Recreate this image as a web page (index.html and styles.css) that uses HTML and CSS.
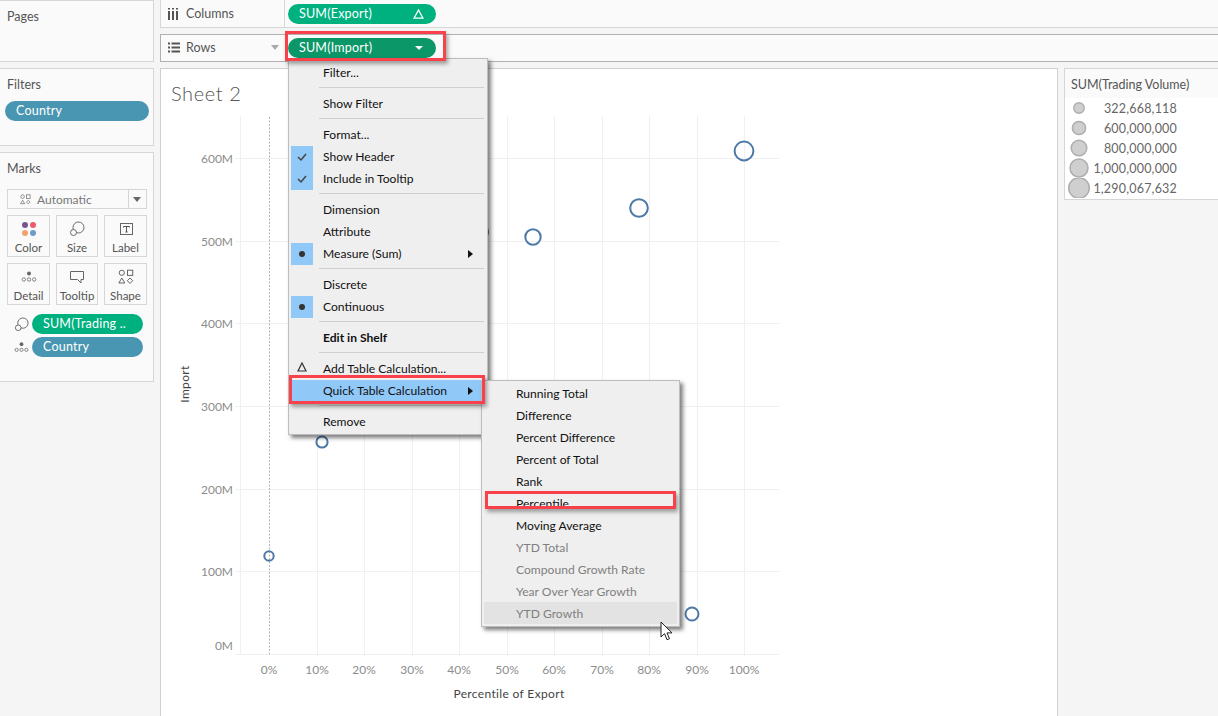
FILE: index.html
```html
<!DOCTYPE html>
<html lang="en">
<head>
    <meta charset="UTF-8">
    <meta name="viewport" content="width=device-width, initial-scale=1.0">
    <title>Sheet 2</title>
    <link rel="stylesheet" href="styles.css">
</head>
<body>
    <!-- Shared icons -->
    <svg class="sprite" width="0" height="0">
        <symbol id="icon-size" viewBox="0 0 16 16">
            <circle cx="9.5" cy="6.5" r="5.5" fill="none" stroke="#666"/>
            <circle cx="4.5" cy="11.5" r="3" fill="#fafafa" stroke="#666"/>
        </symbol>
        <symbol id="icon-detail" viewBox="0 0 16 16">
            <circle cx="8" cy="4.5" r="2" fill="#666"/>
            <circle cx="2.8" cy="10.5" r="1.7" fill="none" stroke="#666" stroke-width=".8"/>
            <circle cx="8" cy="10.5" r="1.7" fill="none" stroke="#666" stroke-width=".8"/>
            <circle cx="13.2" cy="10.5" r="1.7" fill="none" stroke="#666" stroke-width=".8"/>
        </symbol>
        <symbol id="icon-shape" viewBox="0 0 16 16">
            <circle cx="3.8" cy="3.8" r="2.6" fill="none" stroke="#666"/>
            <rect x="9.5" y="1.2" width="5.2" height="5.2" fill="none" stroke="#666"/>
            <path d="M3.8 9l3 5h-6z" fill="none" stroke="#666"/>
            <path d="M12 9l2.7 2.7-2.7 2.7-2.7-2.7z" fill="none" stroke="#666"/>
        </symbol>
    </svg>

    <div class="app">
        <!-- Left column -->
        <aside class="side">
            <section class="card card-pages">
                <h4 class="card-title">Pages</h4>
            </section>
            <section class="card card-filters">
                <h4 class="card-title">Filters</h4>
                <div class="pill pill-blue">Country</div>
            </section>
            <section class="card card-marks">
                <h4 class="card-title">Marks</h4>
                <div class="mark-select">
                    <svg class="auto-icon" width="11" height="11"><use href="#icon-shape"/></svg>
                    <span class="mark-select-text">Automatic</span>
                    <span class="mark-select-arrow"></span>
                </div>
                <div class="mark-grid">
                    <div class="mark-btn">
                        <svg width="16" height="16" viewBox="0 0 16 16">
                            <circle cx="4" cy="4" r="3" fill="#75578f"/>
                            <circle cx="12" cy="4" r="3" fill="#ee5a6c"/>
                            <circle cx="4" cy="12" r="3" fill="#f3a26e"/>
                            <circle cx="12" cy="12" r="3" fill="#6f9bc8"/>
                        </svg>
                        <span>Color</span>
                    </div>
                    <div class="mark-btn">
                        <svg width="16" height="16"><use href="#icon-size"/></svg>
                        <span>Size</span>
                    </div>
                    <div class="mark-btn">
                        <svg width="16" height="16" viewBox="0 0 16 16">
                            <rect x="2.5" y="2.5" width="12" height="11" fill="none" stroke="#666"/>
                            <path d="M5.5 5.5h6M8.5 5.5v5.5M7.3 11h2.4M5.5 5.5v1M11.5 5.5v1" fill="none" stroke="#555"/>
                        </svg>
                        <span>Label</span>
                    </div>
                    <div class="mark-btn">
                        <svg width="16" height="16"><use href="#icon-detail"/></svg>
                        <span>Detail</span>
                    </div>
                    <div class="mark-btn">
                        <svg width="16" height="16" viewBox="0 0 16 16">
                            <path d="M1.5 2.5h13v8h-2.5v3.5l-3.5-3.5h-7z" fill="none" stroke="#666"/>
                        </svg>
                        <span>Tooltip</span>
                    </div>
                    <div class="mark-btn">
                        <svg width="16" height="16"><use href="#icon-shape"/></svg>
                        <span>Shape</span>
                    </div>
                </div>
                <div class="mark-field">
                    <svg width="15" height="15"><use href="#icon-size"/></svg>
                    <div class="pill pill-green">SUM(Trading ..</div>
                </div>
                <div class="mark-field">
                    <svg width="15" height="15"><use href="#icon-detail"/></svg>
                    <div class="pill pill-blue">Country</div>
                </div>
            </section>
        </aside>

        <main class="main">
            <!-- Shelves -->
            <div class="shelf">
                <div class="shelf-label">
                    <svg width="12" height="13" viewBox="0 0 12 13">
                        <path d="M1 1v1.500M1 4v9M5 1v1.500M5 4v9M9 1v1.500M9 4v9" fill="none" stroke="#555" stroke-width="2"/>
                    </svg>
                    <span>Columns</span>
                </div>
                <div class="pill pill-green pill-shelf">
                    <span>SUM(Export)</span>
                    <svg width="11" height="10" viewBox="0 0 11 10"><path d="M5.500 1L1 9.200h9z" fill="none" stroke="#fff" stroke-width="1.300"/></svg>
                </div>
            </div>
            <div class="shelf shelf-active">
                <div class="shelf-label">
                    <svg width="12" height="13" viewBox="0 0 12 13">
                        <path d="M0 2.500h2M3.500 2.500h8.500M0 6.500h2M3.500 6.500h8.500M0 10.500h2M3.500 10.500h8.500" fill="none" stroke="#555" stroke-width="2"/>
                    </svg>
                    <span>Rows</span>
                    <span class="shelf-arrow"></span>
                </div>
                <div class="pill pill-dark pill-shelf">
                    <span>SUM(Import)</span>
                    <span class="pill-arrow"></span>
                </div>
            </div>

            <div class="work">
                <!-- Worksheet -->
                <section class="sheet">
                    <h1 class="sheet-title">Sheet 2</h1>
                    <svg class="chart" width="896" height="608" viewBox="161 108 896 608">
                        <g stroke="#f0f0f0" fill="none">
                            <path d="M240.500 116V654M317.500 116V656M364.500 116V656M412.500 116V656M459.500 116V656M507.500 116V656M554.500 116V656M602.500 116V656M649.500 116V656M697.500 116V656M744.500 116V656"/>
                            <path d="M235 158.500H779M235 241.500H779M235 323.500H779M235 406.500H779M235 489.500H779M235 571.500H779M235 654.500H779"/>
                        </g>
                        <path d="M269.500 117V655" stroke="#b5b5b5" stroke-dasharray="2 1.500" fill="none"/>
                        <g class="axis-y" text-anchor="end">
                            <text x="233" y="163">600M</text>
                            <text x="233" y="246">500M</text>
                            <text x="233" y="328">400M</text>
                            <text x="233" y="411">300M</text>
                            <text x="233" y="494">200M</text>
                            <text x="233" y="576">100M</text>
                            <text x="233" y="650">0M</text>
                        </g>
                        <g class="axis-x" text-anchor="middle">
                            <text x="269" y="674">0%</text>
                            <text x="317" y="674">10%</text>
                            <text x="364" y="674">20%</text>
                            <text x="412" y="674">30%</text>
                            <text x="459" y="674">40%</text>
                            <text x="507" y="674">50%</text>
                            <text x="554" y="674">60%</text>
                            <text x="602" y="674">70%</text>
                            <text x="649" y="674">80%</text>
                            <text x="697" y="674">90%</text>
                            <text x="744" y="674">100%</text>
                        </g>
                        <text class="axis-title" x="509" y="698" text-anchor="middle">Percentile of Export</text>
                        <text class="axis-title" transform="translate(189 384) rotate(-90)" text-anchor="middle">Import</text>
                        <g fill="none" stroke="#4e79a7" stroke-width="2">
                            <circle cx="269" cy="556" r="4.700"/>
                            <circle cx="322" cy="442" r="5.600"/>
                            <circle cx="481" cy="232" r="7"/>
                            <circle cx="533" cy="237" r="7.700"/>
                            <circle cx="639" cy="208" r="8.800"/>
                            <circle cx="744" cy="151" r="9.400"/>
                            <circle cx="692" cy="614" r="6.500"/>
                        </g>
                    </svg>
                </section>

                <!-- Size legend -->
                <aside class="legend-col">
                    <div class="legend">
                        <div class="legend-title">SUM(Trading Volume)</div>
                        <div class="legend-row"><svg width="28" height="20"><circle cx="14" cy="10" r="5.200"/></svg><span>322,668,118</span></div>
                        <div class="legend-row"><svg width="28" height="20"><circle cx="14" cy="10" r="6.600"/></svg><span>600,000,000</span></div>
                        <div class="legend-row"><svg width="28" height="20"><circle cx="14" cy="10" r="7.800"/></svg><span>800,000,000</span></div>
                        <div class="legend-row"><svg width="28" height="20"><circle cx="14" cy="10" r="9"/></svg><span>1,000,000,000</span></div>
                        <div class="legend-row"><svg width="28" height="20"><circle cx="14" cy="10" r="10.300"/></svg><span>1,290,067,632</span></div>
                    </div>
                </aside>
            </div>
        </main>
    </div>

    <!-- Field context menu -->
    <div class="menu menu-field">
        <div class="menu-item"><span class="menu-check"></span>Filter...</div>
        <div class="menu-sep"></div>
        <div class="menu-item"><span class="menu-check"></span>Show Filter</div>
        <div class="menu-sep"></div>
        <div class="menu-item"><span class="menu-check"></span>Format...</div>
        <div class="menu-item"><span class="menu-check is-on"><svg width="12" height="12" viewBox="0 0 12 12"><path d="M2 6l3 3 5-6" fill="none" stroke="#444" stroke-width="1.500"/></svg></span>Show Header</div>
        <div class="menu-item"><span class="menu-check is-on"><svg width="12" height="12" viewBox="0 0 12 12"><path d="M2 6l3 3 5-6" fill="none" stroke="#444" stroke-width="1.500"/></svg></span>Include in Tooltip</div>
        <div class="menu-sep"></div>
        <div class="menu-item"><span class="menu-check"></span>Dimension</div>
        <div class="menu-item"><span class="menu-check"></span>Attribute</div>
        <div class="menu-item"><span class="menu-check is-on"><span class="menu-dot"></span></span>Measure (Sum)<span class="menu-more"></span></div>
        <div class="menu-sep"></div>
        <div class="menu-item"><span class="menu-check"></span>Discrete</div>
        <div class="menu-item"><span class="menu-check is-on"><span class="menu-dot"></span></span>Continuous</div>
        <div class="menu-sep"></div>
        <div class="menu-item menu-bold"><span class="menu-check"></span>Edit in Shelf</div>
        <div class="menu-sep"></div>
        <div class="menu-item"><span class="menu-check"><svg class="menu-delta" width="10" height="10" viewBox="0 0 10 10"><path d="M5 1L1 9h8z" fill="none" stroke="#333" stroke-width="1.200"/></svg></span>Add Table Calculation...</div>
        <div class="menu-item menu-hover"><span class="menu-check"></span>Quick Table Calculation<span class="menu-more"></span></div>
        <div class="menu-sep"></div>
        <div class="menu-item"><span class="menu-check"></span>Remove</div>
    </div>

    <!-- Quick table calculation submenu -->
    <div class="menu menu-sub">
        <div class="menu-item">Running Total</div>
        <div class="menu-item">Difference</div>
        <div class="menu-item">Percent Difference</div>
        <div class="menu-item">Percent of Total</div>
        <div class="menu-item">Rank</div>
        <div class="menu-item">Percentile</div>
        <div class="menu-item">Moving Average</div>
        <div class="menu-item is-disabled">YTD Total</div>
        <div class="menu-item is-disabled">Compound Growth Rate</div>
        <div class="menu-item is-disabled">Year Over Year Growth</div>
        <div class="menu-item is-disabled menu-grey">YTD Growth</div>
    </div>

    <!-- Red callouts -->
    <div class="callout callout-pill"></div>
    <div class="callout callout-quick"></div>
    <div class="callout callout-percentile"></div>

    <svg class="cursor" width="14" height="20" viewBox="0 0 14 20">
        <path d="M1 1v15l3.500-3.300 2.500 6 2.500-1-2.500-5.800h5z" fill="#fff" stroke="#222"/>
    </svg>
</body>
</html>
```

FILE: styles.css
```css
body {
    font-family: Lato, "Open Sans", sans-serif;
    font-size: 12px;
    color: #555;
    background-color: #f5f5f5;
    margin: 0;
    width: 1218px;
    height: 716px;
    overflow: hidden;
    position: relative;
}

.sprite {
    position: absolute;
}

.app {
    display: flex;
    gap: 6px;
    height: 716px;
}

/* Left column */
.side {
    width: 154px;
    flex: none;
    display: flex;
    flex-direction: column;
    gap: 6px;
}

.card {
    background-color: #fafafa;
    border: 1px solid #d6d6d6;
    border-left-width: 0;
    box-sizing: border-box;
}

.card-pages {
    height: 62px;
}

.card-filters {
    height: 78px;
}

.card-marks {
    height: 230px;
}

.card-title {
    margin: 0;
    padding: 8px 7px 0;
    font-size: 12.5px;
    line-height: 15px;
    font-weight: 400;
    color: #555;
}

.pill {
    height: 20px;
    line-height: 20px;
    border-radius: 10px;
    color: #fff;
    font-size: 12.5px;
    padding-left: 11px;
    box-sizing: border-box;
    letter-spacing: 0.2px;
}

.pill-blue {
    background-color: #4996b2;
}

.pill-green {
    background-color: #00b180;
}

.pill-dark {
    background-color: #0b9768;
}

.card-filters .pill {
    margin: 9px 4px 0 5px;
}

.mark-select {
    display: flex;
    align-items: center;
    height: 20px;
    margin: 13px 6px 0 7px;
    border: 1px solid #d6d6d6;
    box-sizing: border-box;
    background-color: #fafafa;
    color: #777;
}

.auto-icon {
    margin-left: 12px;
    margin-right: 6px;
}

.mark-select-text {
    flex: 1;
}

.mark-select-arrow {
    width: 18px;
    height: 18px;
    border-left: 1px solid #d6d6d6;
    box-sizing: border-box;
    position: relative;
}

.mark-select-arrow::after {
    content: "";
    position: absolute;
    left: 4px;
    top: 7px;
    border: 4px solid transparent;
    border-top: 5px solid #666;
}

.mark-grid {
    display: grid;
    grid-template-columns: 43px 42px 43px;
    grid-auto-rows: 42px;
    column-gap: 6px;
    row-gap: 6px;
    margin: 6px 0 0 7px;
}

.mark-btn {
    border: 1px solid #d6d6d6;
    box-sizing: border-box;
    display: flex;
    flex-direction: column;
    align-items: center;
    padding-top: 5px;
    font-size: 11.5px;
    color: #555;
}

.mark-btn span {
    line-height: 15px;
    margin-top: 3px;
}

.mark-field {
    display: flex;
    align-items: center;
    gap: 3px;
    height: 20px;
    margin: 3px 0 0 14px;
}

.mark-grid + .mark-field {
    margin-top: 9px;
}

.mark-field .pill {
    width: 111px;
}

/* Shelves */
.main {
    flex: 1;
    display: flex;
    flex-direction: column;
    gap: 6px;
    min-width: 0;
}

.shelf {
    height: 28px;
    flex: none;
    display: flex;
    align-items: center;
    gap: 3px;
    background-color: #fafafa;
    border-bottom: 1px solid #d6d6d6;
    border-left: 1px solid #d6d6d6;
    box-sizing: border-box;
}

.shelf-active {
    border: 1px solid #b0b0b0;
    border-right: 0;
}

.shelf-label {
    width: 124px;
    height: 100%;
    flex: none;
    display: flex;
    align-items: center;
    gap: 6px;
    padding-left: 7px;
    box-sizing: border-box;
    border-right: 1px solid #d6d6d6;
    font-size: 12.5px;
    color: #555;
}

.shelf-active .shelf-label {
    padding-bottom: 2px;
    border-right-color: transparent;
}

.shelf-arrow {
    margin-left: auto;
    margin-right: 5px;
    border: 4px solid transparent;
    border-top: 5px solid #aaa;
    border-bottom: 0;
}

.pill-shelf {
    width: 148px;
    display: flex;
    align-items: center;
    justify-content: space-between;
    padding-right: 12px;
}

.pill-arrow {
    border: 4px solid transparent;
    border-top: 4px solid #fff;
    border-bottom: 0;
    margin-right: 1px;
}

/* Worksheet */
.work {
    flex: 1;
    display: flex;
    gap: 6px;
    min-height: 0;
}

.sheet {
    width: 898px;
    flex: none;
    background-color: #fff;
    border: 1px solid #d0d0d0;
    border-bottom: 0;
    box-sizing: border-box;
}

.sheet-title {
    margin: 0;
    height: 39px;
    padding: 11px 0 0 10px;
    box-sizing: border-box;
    font-size: 20px;
    line-height: 26px;
    font-weight: 300;
    letter-spacing: 0.6px;
    color: #555;
}

.chart {
    display: block;
}

.axis-y text,
.axis-x text {
    font-size: 12px;
    fill: #8c8c8c;
}

.axis-title {
    font-size: 12px;
    fill: #444;
    letter-spacing: 0.35px;
}

/* Legend */
.legend-col {
    flex: 1;
    min-width: 0;
}

.legend {
    height: 132px;
    background-color: #fff;
    border: 1px solid #d6d6d6;
    border-right: 0;
    box-sizing: border-box;
    overflow: hidden;
}

.legend-title {
    height: 29px;
    line-height: 31px;
    padding-left: 6px;
    background-color: #fafafa;
    font-size: 12.5px;
    color: #555;
}

.legend-row {
    display: flex;
    align-items: center;
    height: 20px;
    width: 112px;
    font-size: 12.5px;
    color: #666;
    letter-spacing: 0.2px;
}

.legend-row svg {
    flex: none;
}

.legend-row circle {
    fill: #cfcfcf;
    stroke: #aeaeae;
    stroke-width: 1.500;
}

.legend-row span {
    margin-left: auto;
}

/* Menus */
.menu {
    position: absolute;
    background-color: #efefef;
    border: 1px solid #bdbdbd;
    box-shadow: 3px 3px 4px rgba(0, 0, 0, 0.5);
    box-sizing: border-box;
    font-size: 12.1px;
    color: #111;
}

.menu-field {
    left: 288px;
    top: 58px;
    width: 200px;
    height: 377px;
    padding: 3px 2px 0;
}

.menu-sub {
    left: 481px;
    top: 380px;
    width: 199px;
    height: 247px;
    padding: 1px 2px;
}

.menu-item {
    display: flex;
    align-items: center;
    height: 22px;
    box-sizing: border-box;
}

.menu-field .menu-item {
    padding-bottom: 1px;
}

.menu-sub .menu-item {
    padding-left: 32px;
    padding-top: 1px;
}

.menu-check {
    width: 22px;
    height: 22px;
    flex: none;
    margin-right: 10px;
    margin-bottom: -1px;
    display: flex;
    align-items: center;
    justify-content: center;
}

.menu-check.is-on {
    background-color: #90c8f8;
}

.menu-delta {
    margin-top: -4px;
}

.menu-dot {
    width: 6px;
    height: 6px;
    border-radius: 50%;
    background-color: #333;
}

.menu-more {
    margin-left: auto;
    margin-right: 12px;
    border: 4px solid transparent;
    border-left: 5px solid #111;
    border-right: 0;
}

.menu-sep {
    height: 9px;
    margin-left: 28px;
    margin-right: 1px;
    position: relative;
}

.menu-sep::after {
    content: "";
    position: absolute;
    left: 0;
    right: 0;
    top: 3px;
    border-top: 1px solid #cfcfcf;
}

.menu-bold {
    font-weight: 700;
}

.menu-hover {
    background-color: #90c8f8;
}

.is-disabled {
    color: #808080;
}

.menu-grey {
    background-color: #e3e3e3;
}

/* Callouts */
.callout {
    position: absolute;
    border: 3px solid #f8414a;
    box-sizing: border-box;
    box-shadow: 2px 3px 4px rgba(0, 0, 0, 0.35);
}

.callout-pill {
    left: 285px;
    top: 31px;
    width: 161px;
    height: 30px;
}

.callout-quick {
    left: 289px;
    top: 375px;
    width: 196px;
    height: 29px;
}

.callout-percentile {
    left: 485px;
    top: 491px;
    width: 191px;
    height: 18px;
}

.cursor {
    position: absolute;
    left: 660px;
    top: 621px;
}
```
